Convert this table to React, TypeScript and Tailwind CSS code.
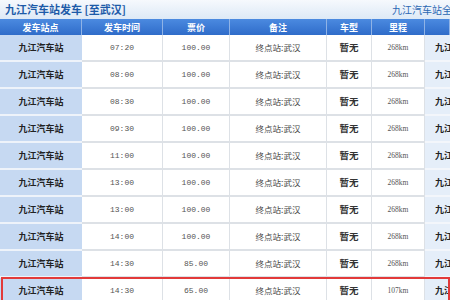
import React from "react";

const rows = [
  { time: "07:20", price: "100.00", km: "268km" },
  { time: "08:00", price: "100.00", km: "268km" },
  { time: "08:30", price: "100.00", km: "268km" },
  { time: "09:30", price: "100.00", km: "268km" },
  { time: "11:00", price: "100.00", km: "268km" },
  { time: "13:00", price: "100.00", km: "268km" },
  { time: "13:00", price: "100.00", km: "268km" },
  { time: "14:00", price: "100.00", km: "268km" },
  { time: "14:30", price: "85.00", km: "268km" },
  { time: "14:30", price: "65.00", km: "107km" },
];

const cols = "grid grid-cols-[82px_81px_67px_97px_45px_53px_1fr]";
const cjk = "font-['Noto_Sans_CJK_SC',sans-serif]";
const mono = "font-['Liberation_Mono','Noto_Sans_CJK_SC',monospace]";

const App = () => {
  return (
    <div className={`w-[450px] h-[300px] overflow-hidden bg-white ${cjk}`}>
      <div className="h-[19px] flex items-center justify-between pl-[5px] bg-gradient-to-b from-[#f6f9fd] to-[#dde9f6]">
        <div className="text-[11px] font-bold text-[#1d5ba8] leading-none whitespace-nowrap">
          九江汽车站发车 [至武汉]
        </div>
        <div className="text-[10px] text-[#2b67b3] leading-none whitespace-nowrap w-[58px] overflow-hidden">
          九江汽车站全部
        </div>
      </div>

      <div className={`${cols} h-[16px] bg-gradient-to-b from-[#4b8ae0] to-[#2f6cc9] text-white text-[9px] font-bold`}>
        {["发车站点", "发车时间", "票价", "备注", "车型", "里程", ""].map((h, i) => (
          <div
            key={i}
            className="flex items-center justify-center border-r border-[#8fb3e6] leading-none"
          >
            {h}
          </div>
        ))}
      </div>

      {rows.map((r, i) => (
        <div key={i} className={`${cols} h-[27px] relative`}>
          <div className="flex items-center justify-center bg-[#c6d9f2] border-b-2 border-[#eef3fa] text-[9px] font-bold text-[#222]">
            九江汽车站
          </div>
          <div className={`flex items-center justify-center border-b-2 border-r border-[#dde1e6] text-[8px] text-[#555] ${mono}`}>
            {r.time}
          </div>
          <div className={`flex items-center justify-center border-b-2 border-r border-[#dde1e6] text-[8px] text-[#555] ${mono}`}>
            {r.price}
          </div>
          <div className="flex items-center justify-center border-b-2 border-r border-[#dde1e6] text-[8.5px] text-[#444]">
            终点站:武汉
          </div>
          <div className="flex items-center justify-center border-b-2 border-r border-[#dde1e6] text-[9.5px] font-bold text-[#333]">
            暂无
          </div>
          <div className="flex items-center justify-center border-b-2 border-r border-[#dde1e6] text-[7.5px] text-[#555] font-['Liberation_Serif',serif]">
            {r.km}
          </div>
          <div className="flex items-center pl-[10px] bg-[#e5eef9] border-b-2 border-[#f3f6fb] text-[9px] font-bold text-[#222] whitespace-nowrap overflow-hidden">
            九江汽车站
          </div>
          {i === rows.length - 1 && (
            <div className="absolute inset-0 -top-[1px] left-[1px] border-2 border-[#e23a3a] pointer-events-none" />
          )}
        </div>
      ))}
    </div>
  );
};

export default App;
